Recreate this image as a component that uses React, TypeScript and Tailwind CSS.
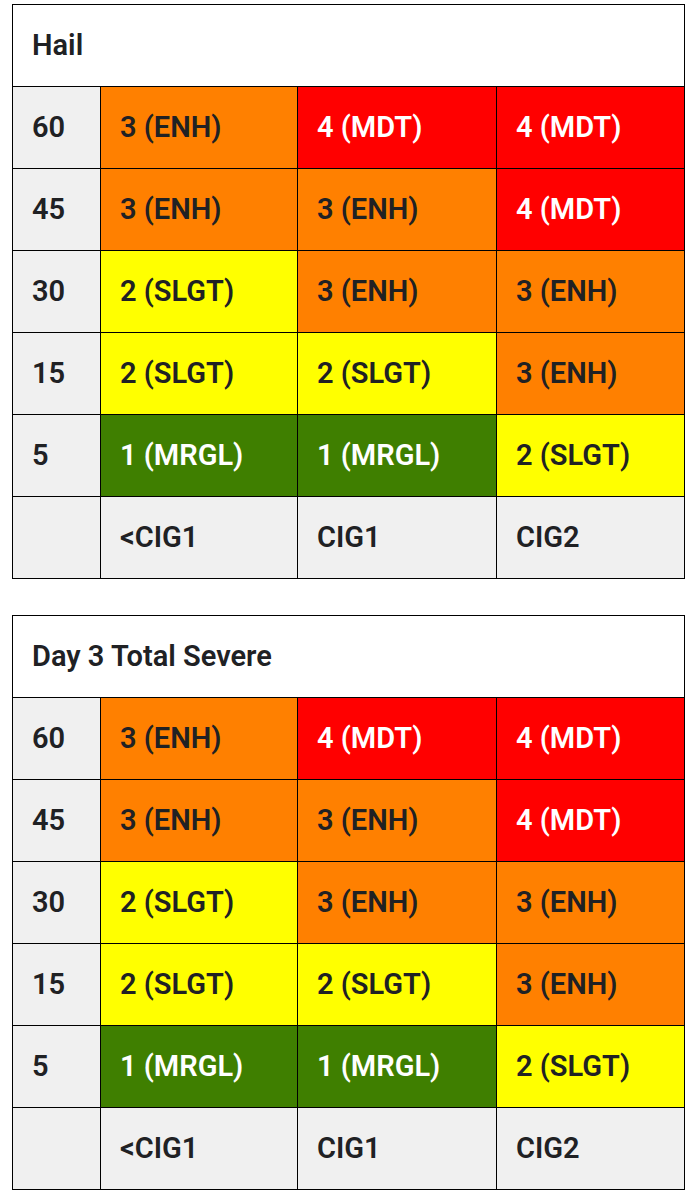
import React from 'react';

type Cell = { label: string; tone: 'enh' | 'mdt' | 'slgt' | 'mrgl' };

const toneClass: Record<Cell['tone'], string> = {
  enh: 'bg-[#ff8000] text-[#202124]',
  mdt: 'bg-[#ff0000] text-white',
  slgt: 'bg-[#ffff00] text-[#202124]',
  mrgl: 'bg-[#3f7f00] text-white',
};

const ENH: Cell = { label: '3 (ENH)', tone: 'enh' };
const MDT: Cell = { label: '4 (MDT)', tone: 'mdt' };
const SLGT: Cell = { label: '2 (SLGT)', tone: 'slgt' };
const MRGL: Cell = { label: '1 (MRGL)', tone: 'mrgl' };

const rows: { pct: string; cells: Cell[] }[] = [
  { pct: '60', cells: [ENH, MDT, MDT] },
  { pct: '45', cells: [ENH, ENH, MDT] },
  { pct: '30', cells: [SLGT, ENH, ENH] },
  { pct: '15', cells: [SLGT, SLGT, ENH] },
  { pct: '5', cells: [MRGL, MRGL, SLGT] },
];

const cols = ['<CIG1', 'CIG1', 'CIG2'];

function RiskTable({ title }: { title: string }) {
  return (
    <table className="w-[672px] table-fixed border-collapse border border-black text-[29px] font-semibold leading-none">
      <colgroup>
        <col className="w-[88px]" />
        <col className="w-[197px]" />
        <col className="w-[199px]" />
        <col className="w-[188px]" />
      </colgroup>
      <thead>
        <tr className="h-[82px]">
          <th colSpan={4} className="border border-black bg-white px-[19px] text-left font-semibold text-[#202124]">
            {title}
          </th>
        </tr>
      </thead>
      <tbody>
        {rows.map(row => (
          <tr key={row.pct} className="h-[82px]">
            <td className="border border-black bg-[#f0f0f0] px-[19px] text-[#202124]">{row.pct}</td>
            {row.cells.map((cell, i) => (
              <td key={i} className={`border border-black px-[19px] ${toneClass[cell.tone]}`}>
                {cell.label}
              </td>
            ))}
          </tr>
        ))}
        <tr className="h-[82px]">
          <td className="border border-black bg-[#f0f0f0]" />
          {cols.map(c => (
            <td key={c} className="border border-black bg-[#f0f0f0] px-[19px] text-[#202124]">{c}</td>
          ))}
        </tr>
      </tbody>
    </table>
  );
}

export default function App() {
  return (
    <div className="min-h-[1200px] bg-white pl-[12px] pt-[4px] font-['Roboto',sans-serif]">
      <div className="flex flex-col gap-[36px]">
        <RiskTable title="Hail" />
        <RiskTable title="Day 3 Total Severe" />
      </div>
    </div>
  );
}
